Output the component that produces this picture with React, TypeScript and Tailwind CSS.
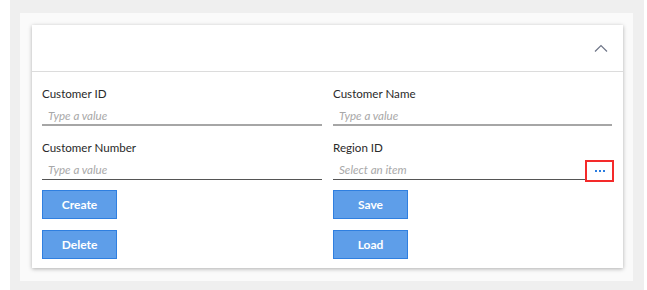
import React from "react";

const Field = ({
  label,
  placeholder,
  strong,
  picker,
}: {
  label: string;
  placeholder: string;
  strong?: boolean;
  picker?: boolean;
}) => (
  <div className="flex flex-col">
    <div className="h-[16px] leading-[16px] text-[11.6px] text-[#2a2a2a]">{label}</div>
    <div
      className={
        "relative h-[24px] flex items-center pl-[6px] " +
        (strong ? "border-b-2 border-[#a6a6a6]" : "border-b border-[#555555]")
      }
    >
      <span className="italic text-[11.6px] text-[#a8a8a8] leading-[16px] pt-[5px]">{placeholder}</span>
      {picker && (
        <div className="absolute right-[-2px] top-[4px] w-[29px] h-[22px] border-[2.5px] border-[#f42a2a] bg-white flex items-center justify-center gap-[2px]">
          <span className="w-[2px] h-[2px] bg-[#2b7de1]" />
          <span className="w-[2px] h-[2px] bg-[#2b7de1]" />
          <span className="w-[2px] h-[2px] bg-[#2b7de1]" />
        </div>
      )}
    </div>
  </div>
);

const Btn = ({ children }: { children: React.ReactNode }) => (
  <button className="w-[75px] h-[29px] bg-[#5e9ee9] border border-[#2f7fe0] text-white text-[12px] font-bold flex items-center justify-center">
    {children}
  </button>
);

export default function App() {
  return (
    <div className="w-[647px] h-[290px] bg-white overflow-hidden font-['Lato',sans-serif]">
      <div className="ml-[10px] w-[634px] h-[290px] bg-[#efefef] pt-[13px] pl-[10px]">
        <div className="w-[613px] h-[268px] bg-[#fafafa] pt-[12px] pl-[12px]">
          <div className="w-[591px] h-[243px] bg-white shadow-[0_1px_4px_rgba(0,0,0,0.3)] flex flex-col">
            <div className="h-[47px] border-b border-[#dcdcdc] flex items-center justify-end pr-[15px]">
              <svg width="14" height="8" viewBox="0 0 14 8">
                <polyline points="1,7.5 7,1.5 13,7.5" fill="none" stroke="#6e7587" strokeWidth="1.2" />
              </svg>
            </div>
            <div className="pl-[10px] pr-[11px] pt-[14px] grid grid-cols-[280px_279px] gap-x-[11px]">
              <div className="flex flex-col gap-[14px]">
                <Field label="Customer ID" placeholder="Type a value" strong />
                <Field label="Customer Number" placeholder="Type a value" />
              </div>
              <div className="flex flex-col gap-[14px]">
                <Field label="Customer Name" placeholder="Type a value" strong />
                <Field label="Region ID" placeholder="Select an item" picker />
              </div>
              <div className="flex flex-col gap-[11px] pt-[10px]">
                <Btn>Create</Btn>
                <Btn>Delete</Btn>
              </div>
              <div className="flex flex-col gap-[11px] pt-[10px]">
                <Btn>Save</Btn>
                <Btn>Load</Btn>
              </div>
            </div>
          </div>
        </div>
      </div>
    </div>
  );
}
